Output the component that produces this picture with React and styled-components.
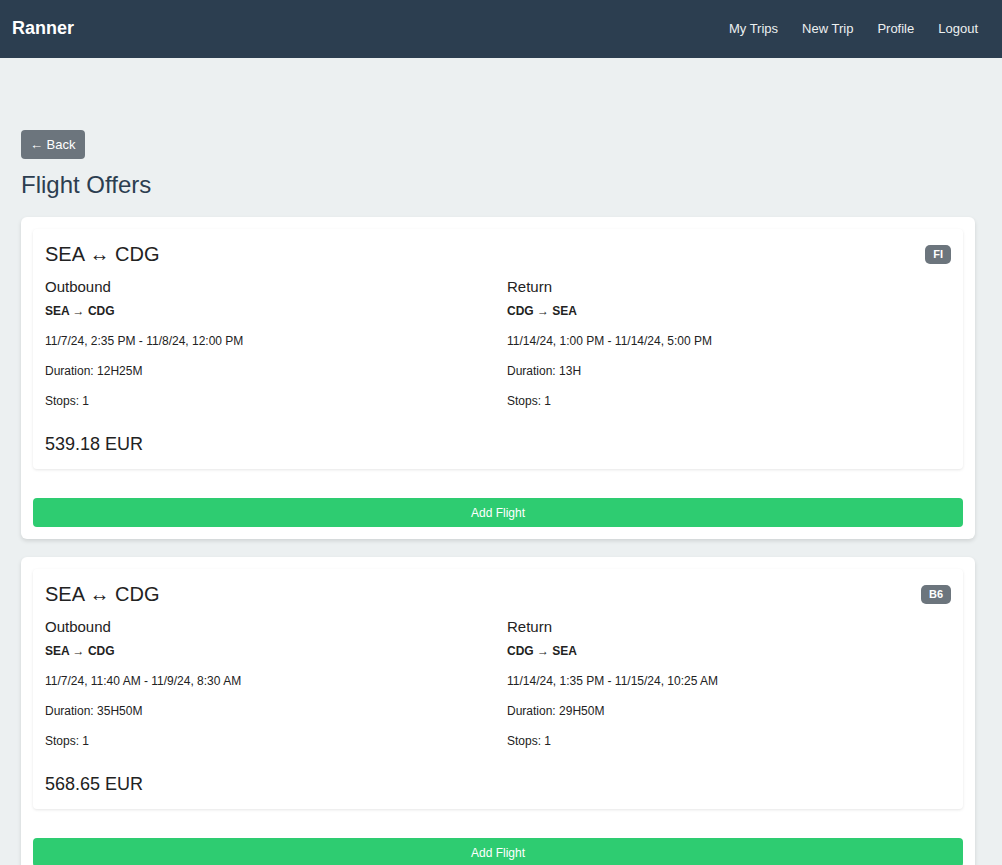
import React from "react";
import styled, { createGlobalStyle } from "styled-components";

const GlobalStyle = createGlobalStyle`
  html, body {
    margin: 0;
    padding: 0;
    background: #ecf0f1;
    font-family: "Liberation Sans", Arial, sans-serif;
    color: #2c3e50;
  }
  * {
    box-sizing: border-box;
  }
`;

const Navbar = styled.nav`
  height: 58px;
  background: #2c3e50;
  display: flex;
  align-items: center;
  justify-content: space-between;
  padding: 0 24px 2px 12px;
`;

const Brand = styled.div`
  color: #fff;
  font-size: 18px;
  font-weight: bold;
`;

const NavLinks = styled.div`
  display: flex;
  gap: 24px;
  a {
    color: #ecf0f1;
    font-size: 13px;
    text-decoration: none;
  }
`;

const Main = styled.main`
  padding: 72px 27px 0 21px;
`;

const BackButton = styled.button`
  display: block;
  height: 29px;
  padding: 0 9px;
  border: none;
  border-radius: 4px;
  background: #6c757d;
  color: #fff;
  font-family: inherit;
  font-size: 13px;
`;

const Title = styled.h1`
  margin: 12px 0 18px;
  font-size: 24px;
  line-height: 28px;
  font-weight: normal;
  color: #2c3e50;
`;

const OfferCard = styled.section`
  background: #fff;
  border-radius: 6px;
  padding: 12px;
  box-shadow: 0 2px 4px rgba(0, 0, 0, 0.12);
  margin-bottom: 18px;
`;

const FlightBox = styled.div`
  border-radius: 4px;
  padding: 13px 12px 14px;
  box-shadow: 0 1px 3px rgba(0, 0, 0, 0.1);
  color: #222;
`;

const Header = styled.div`
  display: flex;
  align-items: center;
  justify-content: space-between;
`;

const Route = styled.h2`
  margin: 0;
  font-size: 20px;
  line-height: 24px;
  font-weight: normal;
`;

const Badge = styled.span`
  background: #6c757d;
  color: #fff;
  font-size: 11px;
  font-weight: bold;
  line-height: 19px;
  padding: 0 8px;
  border-radius: 5px;
`;

const Legs = styled.div`
  display: grid;
  grid-template-columns: 1fr 1fr;
  column-gap: 18px;
  margin-top: 12px;
`;

const LegTitle = styled.h3`
  margin: 0;
  font-size: 15px;
  line-height: 18px;
  font-weight: normal;
`;

const LegRoute = styled.div`
  margin-top: 8px;
  font-size: 12px;
  line-height: 14px;
  font-weight: bold;
`;

const LegLine = styled.p`
  margin: 16px 0 0;
  font-size: 12px;
  line-height: 14px;
`;

const Price = styled.div`
  margin-top: 25px;
  font-size: 18px;
  line-height: 22px;
`;

const AddButton = styled.button`
  display: block;
  width: 100%;
  height: 29px;
  margin-top: 29px;
  border: none;
  border-radius: 4px;
  background: #2ecc71;
  color: #fff;
  font-family: inherit;
  font-size: 12px;
  font-weight: normal;
`;

const offers = [
  {
    carrier: "FI",
    price: "539.18 EUR",
    legs: [
      {
        title: "Outbound",
        route: "SEA → CDG",
        time: "11/7/24, 2:35 PM - 11/8/24, 12:00 PM",
        duration: "12H25M",
        stops: 1,
      },
      {
        title: "Return",
        route: "CDG → SEA",
        time: "11/14/24, 1:00 PM - 11/14/24, 5:00 PM",
        duration: "13H",
        stops: 1,
      },
    ],
  },
  {
    carrier: "B6",
    price: "568.65 EUR",
    legs: [
      {
        title: "Outbound",
        route: "SEA → CDG",
        time: "11/7/24, 11:40 AM - 11/9/24, 8:30 AM",
        duration: "35H50M",
        stops: 1,
      },
      {
        title: "Return",
        route: "CDG → SEA",
        time: "11/14/24, 1:35 PM - 11/15/24, 10:25 AM",
        duration: "29H50M",
        stops: 1,
      },
    ],
  },
];

const App = () => {
  return (
    <>
      <GlobalStyle />
      <Navbar>
        <Brand>Ranner</Brand>
        <NavLinks>
          <a href="#">My Trips</a>
          <a href="#">New Trip</a>
          <a href="#">Profile</a>
          <a href="#">Logout</a>
        </NavLinks>
      </Navbar>
      <Main>
        <BackButton>← Back</BackButton>
        <Title>Flight Offers</Title>
        {offers.map((offer, i) => (
          <OfferCard key={i}>
            <FlightBox>
              <Header>
                <Route>SEA ↔ CDG</Route>
                <Badge>{offer.carrier}</Badge>
              </Header>
              <Legs>
                {offer.legs.map((leg) => (
                  <div key={leg.title}>
                    <LegTitle>{leg.title}</LegTitle>
                    <LegRoute>{leg.route}</LegRoute>
                    <LegLine>{leg.time}</LegLine>
                    <LegLine>Duration: {leg.duration}</LegLine>
                    <LegLine>Stops: {leg.stops}</LegLine>
                  </div>
                ))}
              </Legs>
              <Price>{offer.price}</Price>
            </FlightBox>
            <AddButton>Add Flight</AddButton>
          </OfferCard>
        ))}
      </Main>
    </>
  );
};

export default App;
